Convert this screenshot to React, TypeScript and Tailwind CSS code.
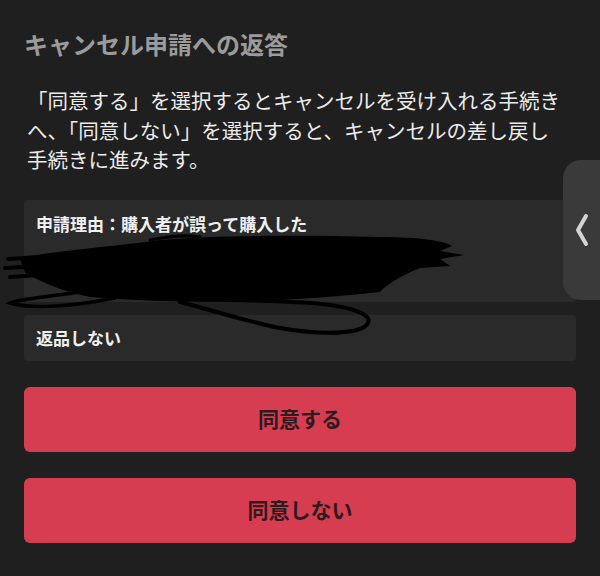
import React from 'react';

const font = { fontFamily: '"Noto Sans CJK JP", "Noto Sans", sans-serif' };

const Scribble: React.FC = () => (
  <svg
    className="absolute left-0 top-0 pointer-events-none"
    width="600"
    height="576"
    viewBox="0 0 600 576"
    fill="none"
  >
    <path
      d="M20 258 C60 250 120 246 160 240 C220 235 300 235 380 237 C420 237 445 241 452 246 L440 251 L464 255 L440 259 L450 266 L420 268 C400 276 386 285 380 292 C340 296 300 300 250 301 C200 303 140 301 90 297 C60 291 40 281 25 273 Z"
      fill="#000"
    />
    <g stroke="#000" strokeLinecap="round" fill="none">
      <path d="M8 259 L40 257" strokeWidth="4" />
      <path d="M5 268 L40 266" strokeWidth="4" />
      <path d="M10 277 L40 275" strokeWidth="4" />
      <path d="M90 290 C60 296 22 298 10 303 C30 309 70 307 115 298" strokeWidth="3.5" />
      <path d="M200 299 C280 302 352 300 368 318 C374 333 330 337 280 328 C240 320 205 308 180 302" strokeWidth="4" />
      <path d="M150 240 C170 236 190 235 200 237" strokeWidth="3" />
    </g>
  </svg>
);

export default function App() {
  return (
    <div className="relative w-[600px] h-[576px] overflow-hidden bg-[#1f1f1f]" style={font}>
      <div className="flex flex-col px-6 pt-[28px]">
        <h1 className="text-[24px] leading-[32px] font-bold text-[#9b9b9b]">
          キャンセル申請への返答
        </h1>

        <p className="mt-[26px] pl-[3px] text-[20.5px] leading-[29.5px] text-[#ececec] whitespace-nowrap">
          「同意する」を選択するとキャンセルを受け入れる手続き
          <br />
          へ、「同意しない」を選択すると、キャンセルの差し戻し
          <br />
          手続きに進みます。
        </p>

        <div className="mt-[25px] h-[102px] rounded-[4px] bg-[#2a2a2a] px-3 pt-[11px]">
          <p className="text-[17px] leading-[25px] font-bold text-[#f0f0f0]">
            申請理由：購入者が誤って購入した
          </p>
        </div>

        <div className="mt-[13px] h-[46px] flex items-center rounded-[4px] bg-[#2a2a2a] px-3">
          <p className="text-[17px] font-bold text-[#f0f0f0]">返品しない</p>
        </div>

        <button className="mt-[26px] h-[65px] w-full rounded-[6px] bg-[#d73d51] text-[21px] font-bold text-[#2d1a1e]">
          同意する
        </button>

        <button className="mt-[26px] h-[65px] w-full rounded-[6px] bg-[#d73d51] text-[21px] font-bold text-[#2d1a1e]">
          同意しない
        </button>
      </div>

      <Scribble />

      <div className="absolute right-0 top-[160px] w-[37px] h-[140px] rounded-l-[18px] bg-[#3a3a3a] flex items-center justify-center">
        <svg width="16" height="34" viewBox="0 0 16 34" fill="none">
          <path d="M12 3 L4 17 L12 31" stroke="#d4d4d4" strokeWidth="4" strokeLinecap="round" strokeLinejoin="round" />
        </svg>
      </div>
    </div>
  );
}
